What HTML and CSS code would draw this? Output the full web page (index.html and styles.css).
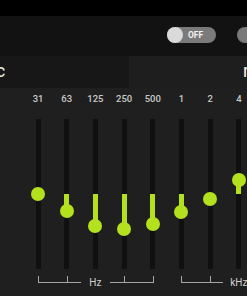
FILE: index.html
```html
<!DOCTYPE html>
<html>
<head>
<meta charset="utf-8">
<link rel="stylesheet" href="styles.css">
</head>
<body>
<div class="app">
  <div class="status"></div>
  <div class="toolbar">
    <div class="toggle off"><span class="knob"></span><span class="tlabel">OFF</span></div>
    <div class="toggle on"><span class="knob"></span></div>
  </div>
  <div class="presets">
    <div class="preset current"><span class="pname shifted">Classic</span></div>
    <div class="preset next"><span class="pname">rock</span></div>
  </div>
  <div class="eq">
    <div class="band" style="--pos:75px"><div class="lbl">31</div><div class="track"><div class="fill"></div><div class="thumb"></div></div><div class="br start"></div></div>
    <div class="band" style="--pos:92px"><div class="lbl">63</div><div class="track"><div class="fill"></div><div class="thumb"></div></div><div class="br mid"></div></div>
    <div class="band" style="--pos:107px"><div class="lbl">125</div><div class="track"><div class="fill"></div><div class="thumb"></div></div><div class="br label"><span>Hz</span></div></div>
    <div class="band" style="--pos:110px"><div class="lbl">250</div><div class="track"><div class="fill"></div><div class="thumb"></div></div><div class="br mid"></div></div>
    <div class="band" style="--pos:105px"><div class="lbl">500</div><div class="track"><div class="fill"></div><div class="thumb"></div></div><div class="br end"></div></div>
    <div class="band" style="--pos:93px"><div class="lbl">1</div><div class="track"><div class="fill"></div><div class="thumb"></div></div><div class="br start"></div></div>
    <div class="band" style="--pos:80px"><div class="lbl">2</div><div class="track"><div class="fill"></div><div class="thumb"></div></div><div class="br mid short"></div></div>
    <div class="band" style="--pos:61px"><div class="lbl">4</div><div class="track"><div class="fill"></div><div class="thumb"></div></div><div class="br label"><span>kHz</span></div></div>
    <div class="band" style="--pos:70px"><div class="lbl">8</div><div class="track"><div class="fill"></div><div class="thumb"></div></div><div class="br mid"></div></div>
    <div class="band" style="--pos:75px"><div class="lbl">16</div><div class="track"><div class="fill"></div><div class="thumb"></div></div><div class="br end"></div></div>
  </div>
</div>
</body>
</html>
```
FILE: styles.css
```css
html, body {
  margin: 0;
  padding: 0;
  background: #1f1f1f;
  width: 247px;
  height: 296px;
  overflow: hidden;
}
.app {
  width: 330px;
  font-family: Roboto, "Noto Sans", sans-serif;
}
.status {
  height: 16px;
  background: #000;
}
.toolbar {
  height: 40px;
  background: #121212;
  display: flex;
  align-items: flex-start;
  box-sizing: border-box;
  padding: 11px 0 0 167px;
  gap: 21px;
}
.toggle {
  width: 49px;
  height: 16px;
  border-radius: 8px;
  background: #7a7a7a;
  display: flex;
  align-items: center;
}
.toggle .knob {
  width: 16px;
  height: 16px;
  border-radius: 50%;
  background: #dadada;
}
.toggle.on {
  justify-content: flex-end;
}
.toggle.on .knob {
  background: #e6e6e6;
}
.tlabel {
  margin-left: 5px;
  font-size: 8.5px;
  font-weight: 700;
  color: #f2f2f2;
  line-height: 16px;
}
.presets {
  height: 32px;
  display: flex;
}
.preset {
  height: 32px;
  line-height: 30px;
  font-size: 18px;
  color: #f0f0f0;
  white-space: nowrap;
  overflow: hidden;
}
.preset.current {
  width: 129px;
  background: #171717;
}
.preset.next {
  flex: 1;
  background: #1e1e1e;
  padding-left: 114px;
}
.pname.shifted {
  display: inline-block;
  margin-left: -53px;
}
.eq {
  display: flex;
  padding: 5px 0 0 23.7px;
}
.band {
  width: 28.7px;
  flex: none;
  display: flex;
  flex-direction: column;
  align-items: center;
}
.lbl {
  height: 12px;
  line-height: 12px;
  font-size: 9.5px;
  font-weight: 500;
  color: #c9c9c9;
}
.track {
  position: relative;
  margin-top: 14px;
  width: 5px;
  height: 150px;
  background: #101010;
}
.fill {
  position: absolute;
  left: 0;
  width: 5px;
  top: min(var(--pos), 75px);
  height: max(calc(var(--pos) - 75px), calc(75px - var(--pos)));
  background: #b4e11e;
}
.thumb {
  position: absolute;
  left: -4.5px;
  top: calc(var(--pos) - 7px);
  width: 14px;
  height: 14px;
  border-radius: 50%;
  background: #b4e11e;
}
.br {
  position: relative;
  align-self: stretch;
  margin-top: 7px;
  height: 7px;
}
.br::before {
  content: "";
  position: absolute;
  left: 50%;
  top: 0;
  bottom: 0;
  width: 1px;
  background: #a6a6a6;
}
.br::after {
  content: "";
  position: absolute;
  bottom: 0;
  height: 1px;
  background: #a6a6a6;
}
.br.start::after { left: 50%; right: 0; }
.br.mid::after { left: 0; right: 0; }
.br.mid.short::after { right: 2px; }
.br.end::after { left: 0; right: 50%; }
.br.label::before, .br.label::after { display: none; }
.br.label {
  display: flex;
  justify-content: center;
  align-items: flex-end;
}
.br.label span {
  font-size: 10px;
  line-height: 12px;
  margin-bottom: -5.5px;
  color: #d2d2d2;
}
```
